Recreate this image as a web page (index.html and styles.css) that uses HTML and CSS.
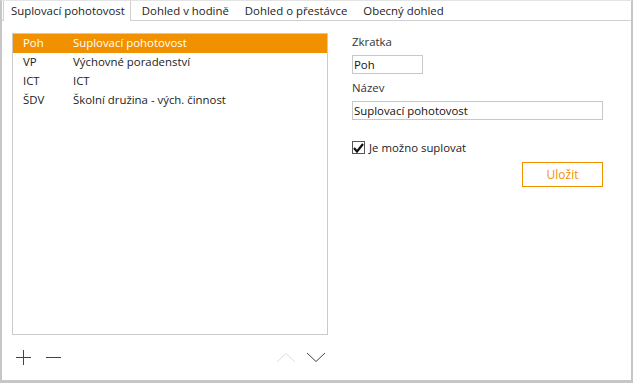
FILE: index.html
```html
<!DOCTYPE html>
<html lang="cs">
<head>
  <meta charset="UTF-8" />
  <title>Dohledy</title>
  <link rel="stylesheet" href="styles.css">
</head>
<body>
  <div class="window">
    <div class="tabs">
      <div class="tab active">Suplovací pohotovost</div>
      <div class="tab">Dohled v hodině</div>
      <div class="tab">Dohled o přestávce</div>
      <div class="tab">Obecný dohled</div>
    </div>

    <div class="content">
      <div class="list-col">
        <div class="list">
          <div class="row selected"><span class="code">Poh</span><span>Suplovací pohotovost</span></div>
          <div class="row"><span class="code">VP</span><span>Výchovné poradenství</span></div>
          <div class="row"><span class="code">ICT</span><span>ICT</span></div>
          <div class="row"><span class="code">ŠDV</span><span>Školní družina - vých. činnost</span></div>
        </div>
        <div class="toolbar">
          <svg class="icon" width="16" height="16" viewBox="0 0 16 16"><path d="M0 8.5H15M7.5 1V16" stroke="#444" stroke-width="1"/></svg>
          <svg class="icon" width="16" height="16" viewBox="0 0 16 16"><path d="M0 8.5H15" stroke="#444" stroke-width="1"/></svg>
          <span class="spacer"></span>
          <svg class="icon" width="20" height="11" viewBox="0 0 20 11"><path d="M1 10L10 1.5L19 10" fill="none" stroke="#ddd" stroke-width="1"/></svg>
          <svg class="icon" width="20" height="11" viewBox="0 0 20 11"><path d="M1 1L10 9.5L19 1" fill="none" stroke="#444" stroke-width="1"/></svg>
        </div>
      </div>

      <div class="form">
        <label class="label">Zkratka</label>
        <div class="input short">Poh</div>
        <label class="label">Název</label>
        <div class="input">Suplovací pohotovost</div>
        <div class="check">
          <span class="box">
            <svg width="11" height="10" viewBox="0 0 11 10"><path d="M1 5L4 8.5L10 1" fill="none" stroke="#111" stroke-width="2.2"/></svg>
          </span>
          Je možno suplovat
        </div>
        <div class="actions">
          <button>Uložit</button>
        </div>
      </div>
    </div>
  </div>
</body>
</html>
```

FILE: styles.css
```css
body {
  margin: 0;
  font-family: 'Open Sans', 'Noto Sans', sans-serif;
  font-size: 11.4px;
  color: #222;
  background: #fff;
}
.window {
  width: 633px;
  height: 383px;
  box-sizing: border-box;
  border-top: 1px solid #e4e4e4;
  border-left: 2px solid #c6c6c6;
  border-right: 2px solid #c6c6c6;
  border-bottom: 3px solid #c6c6c6;
  display: flex;
  flex-direction: column;
}
.tabs {
  display: flex;
  height: 19px;
  border-bottom: 1px solid #d0d0d0;
}
.tab {
  padding: 0 8px;
  line-height: 19px;
  white-space: nowrap;
}
.tab.active {
  margin-left: 1px;
  padding: 0 5px 0 7px;
  border-left: 1px solid #d0d0d0;
  border-right: 1px solid #d0d0d0;
  background: #fff;
  height: 20px;
  margin-bottom: -1px;
}
.tab.active + .tab {
  padding-left: 11px;
}
.content {
  display: flex;
  padding: 12px 0 0 10px;
  gap: 24px;
}
.list-col {
  width: 316px;
}
.list {
  height: 300px;
  border: 1px solid #cbcbcb;
}
.row {
  display: flex;
  height: 19px;
  line-height: 18px;
  padding-left: 10px;
}
.row .code {
  width: 50px;
}
.row.selected {
  background: #f29100;
  color: #fff;
}
.toolbar {
  display: flex;
  align-items: center;
  gap: 14px;
  padding: 14px 2px 0 4px;
}
.toolbar .spacer {
  flex: 1;
}
.toolbar .icon:last-child {
  margin-left: -4px;
}
.form {
  width: 251px;
  padding-top: 1px;
}
.label {
  display: block;
  color: #333;
  line-height: 16px;
}
.input {
  border: 1px solid #c8c8c8;
  height: 17px;
  line-height: 17px;
  padding-left: 1px;
  margin: 5px 0 6px;
  color: #111;
}
.input.short {
  width: 68px;
}
.check {
  display: flex;
  align-items: center;
  gap: 4px;
  margin-top: 20px;
  color: #222;
}
.box {
  width: 11px;
  height: 11px;
  border: 1px solid #555;
  display: flex;
  align-items: center;
  justify-content: center;
}
.actions {
  display: flex;
  justify-content: flex-end;
  margin-top: 7px;
}
button {
  width: 81px;
  height: 25px;
  border: 1px solid #f29100;
  background: #fff;
  color: #f29100;
  font-family: inherit;
  font-size: 12px;
  padding: 0;
}
```
